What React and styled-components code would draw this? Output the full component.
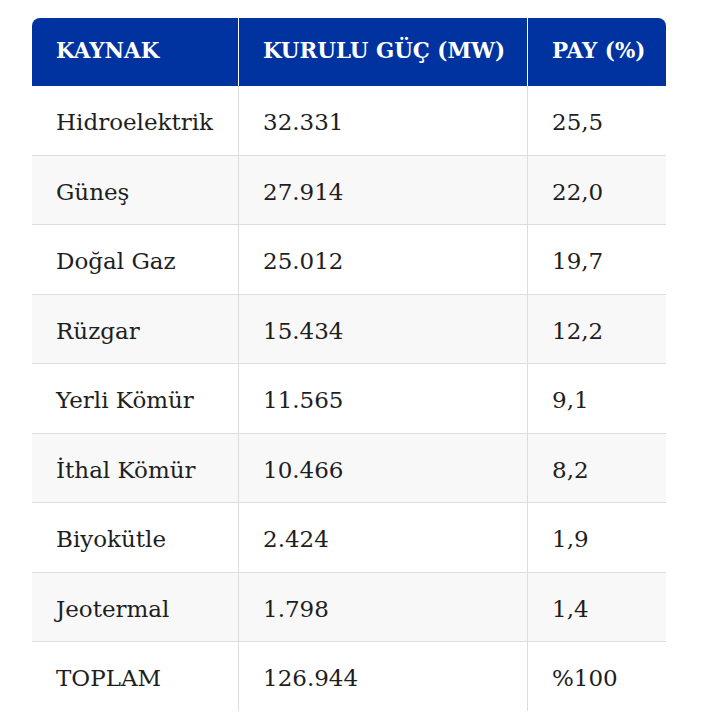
import React from "react";
import styled, { createGlobalStyle } from "styled-components";

const GlobalStyle = createGlobalStyle`
  html, body {
    margin: 0;
    padding: 0;
    background: #ffffff;
  }
  body {
    font-family: "DejaVu Serif", serif;
  }
`;

const Page = styled.div`
  padding: 18px 36px 11px 32px;
`;

const TableFrame = styled.div`
  width: 634px;
  border-radius: 8px 8px 0 0;
  overflow: hidden;
`;

const Table = styled.table`
  width: 100%;
  border-collapse: separate;
  border-spacing: 0;
  table-layout: fixed;
`;

const HeadCell = styled.th`
  background: #0033a0;
  color: #ffffff;
  font-family: "DejaVu Serif", serif;
  font-weight: 700;
  font-size: 21.4px;
  line-height: 28px;
  text-align: left;
  padding: 19px 24px 21px 24px;
  border-left: ${(p) => (p.$first ? "none" : "1px solid #ffffff")};
  white-space: nowrap;
`;

const Row = styled.tr`
  background: ${(p) => (p.$striped ? "#f8f8f8" : "#ffffff")};
`;

const Cell = styled.td`
  color: #1e1e1e;
  font-family: "DejaVu Serif", serif;
  font-size: 23px;
  line-height: 32.5px;
  padding: 20px 24px 16px 24px;
  border-left: ${(p) => (p.$first ? "none" : "1px solid #dddddd")};
  border-bottom: ${(p) => (p.$last ? "none" : "1px solid #dddddd")};
  white-space: nowrap;
`;

const rows = [
  ["Hidroelektrik", "32.331", "25,5"],
  ["Güneş", "27.914", "22,0"],
  ["Doğal Gaz", "25.012", "19,7"],
  ["Rüzgar", "15.434", "12,2"],
  ["Yerli Kömür", "11.565", "9,1"],
  ["İthal Kömür", "10.466", "8,2"],
  ["Biyokütle", "2.424", "1,9"],
  ["Jeotermal", "1.798", "1,4"],
  ["TOPLAM", "126.944", "%100"],
];

export default function App() {
  return (
    <>
      <GlobalStyle />
      <Page>
        <TableFrame>
          <Table>
            <colgroup>
              <col style={{ width: "206px" }} />
              <col style={{ width: "289px" }} />
              <col style={{ width: "139px" }} />
            </colgroup>
            <thead>
              <tr>
                <HeadCell $first>KAYNAK</HeadCell>
                <HeadCell>KURULU GÜÇ (MW)</HeadCell>
                <HeadCell>PAY (%)</HeadCell>
              </tr>
            </thead>
            <tbody>
              {rows.map((r, i) => {
                const last = i === rows.length - 1;
                return (
                  <Row key={r[0]} $striped={i % 2 === 1}>
                    <Cell $first $last={last}>{r[0]}</Cell>
                    <Cell $last={last}>{r[1]}</Cell>
                    <Cell $last={last}>{r[2]}</Cell>
                  </Row>
                );
              })}
            </tbody>
          </Table>
        </TableFrame>
      </Page>
    </>
  );
}
